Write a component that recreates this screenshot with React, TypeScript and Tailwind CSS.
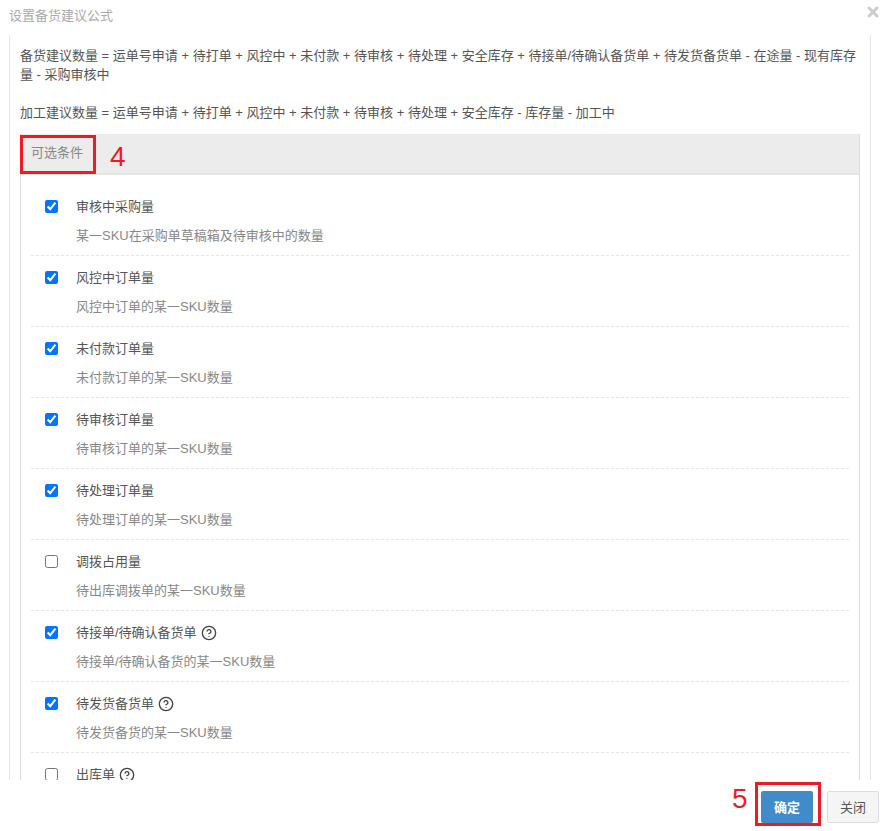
import { CircleHelp, X } from "lucide-react";

const font = "font-['Liberation_Sans','Noto_Sans_CJK_SC',sans-serif]";

const items = [
  { title: "审核中采购量", desc: "某一SKU在采购单草稿箱及待审核中的数量", checked: true },
  { title: "风控中订单量", desc: "风控中订单的某一SKU数量", checked: true },
  { title: "未付款订单量", desc: "未付款订单的某一SKU数量", checked: true },
  { title: "待审核订单量", desc: "待审核订单的某一SKU数量", checked: true },
  { title: "待处理订单量", desc: "待处理订单的某一SKU数量", checked: true },
  { title: "调拨占用量", desc: "待出库调拨单的某一SKU数量", checked: false },
  { title: "待接单/待确认备货单", desc: "待接单/待确认备货的某一SKU数量", checked: true, help: true },
  { title: "待发货备货单", desc: "待发货备货的某一SKU数量", checked: true, help: true },
  { title: "出库单", checked: false, help: true },
];

export default function App() {
  return (
    <div className={`flex h-[831px] w-[886px] flex-col overflow-hidden bg-white text-[13px] leading-[19px] text-[#555] ${font}`}>
      <div className="flex h-[35px] shrink-0 items-start justify-between pl-[9px] pr-[5px] pt-[6px]">
        <span className="text-[#aaa]">设置备货建议公式</span>
        <X size={16} strokeWidth={4.5} className="-mt-[2px] text-[#ccc]" />
      </div>

      <div className="mx-[9px] w-[862px] flex-1 overflow-hidden border-x border-[#e5e5e5] px-[10px] pt-[11px]">
        <p>
          备货建议数量 = 运单号申请 + 待打单 + 风控中 + 未付款 + 待审核 + 待处理 + 安全库存 + 待接单/待确认备货单 + 待发货备货单 - 在途量 - 现有库存量 - 采购审核中
        </p>
        <p className="mt-[19px]">
          加工建议数量 = 运单号申请 + 待打单 + 风控中 + 未付款 + 待审核 + 待处理 + 安全库存 - 库存量 - 加工中
        </p>

        <div className="relative mt-[12px] w-[840px] border-x border-[#ddd]">
          <div className="flex h-[41px] items-center border-b-2 border-[#e5e5e5] bg-[#ececec] pb-[3px] pl-[10px] text-[#888]">
            可选条件
          </div>
          <div className="pointer-events-none absolute -left-px top-px h-[39px] w-[76px] border-[3px] border-[#ed1c24]" />
          <span className="absolute left-[89px] top-[8px] text-[28px] leading-[30px] text-[#ed1c24]">4</span>

          <div className="px-[10px] pt-[10px]">
            {items.map((item) => (
              <div key={item.title} className="h-[71px] border-b border-dashed border-[#e5e5e5] pt-[12px]">
                <div className="flex items-center">
                  <input type="checkbox" readOnly checked={item.checked} className="ml-[14px] mr-[18px] size-[13px]" />
                  <span>{item.title}</span>
                  {item.help && <CircleHelp size={16} strokeWidth={2} className="ml-[4px] text-[#444]" />}
                </div>
                {item.desc && <p className="mt-[10px] pl-[45px] text-[#888]">{item.desc}</p>}
              </div>
            ))}
          </div>
        </div>
      </div>

      <div className="flex h-[51px] shrink-0 items-start justify-end pr-[7px] pt-[11px]">
        <div className="relative mr-[14px]">
          <span className="absolute -left-[29px] -top-[7px] text-[28px] leading-[30px] text-[#ed1c24]">5</span>
          <div className="pointer-events-none absolute -left-[6px] -top-[9px] h-[44px] w-[66px] border-[3px] border-[#ed1c24]" />
          <button className="h-[32px] w-[52px] rounded-[2px] bg-[#428bca] font-bold text-white">确定</button>
        </div>
        <button className="h-[32px] w-[52px] rounded-[2px] border border-[#ddd] bg-[#f5f5f5] text-[#555]">关闭</button>
      </div>
    </div>
  );
}
